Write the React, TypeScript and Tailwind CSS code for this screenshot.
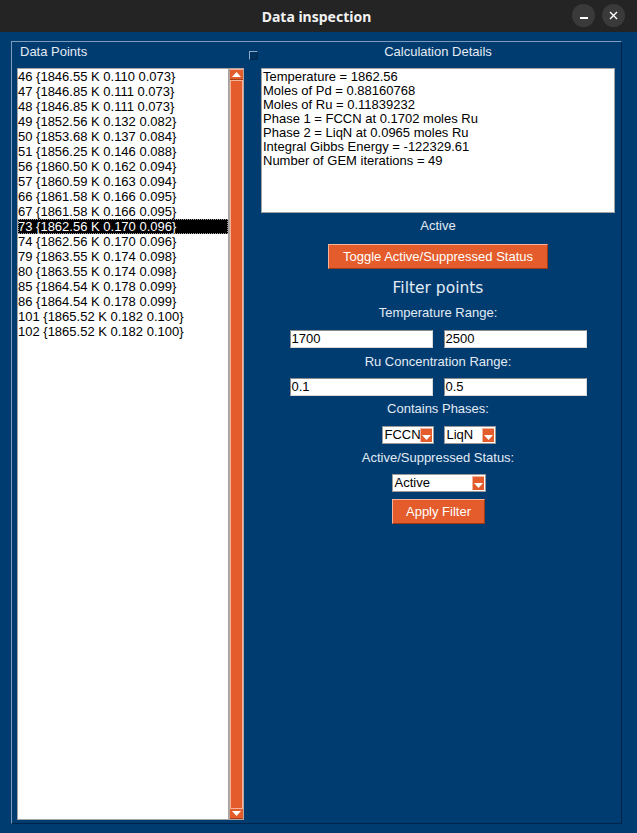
const points = [
  '46 {1846.55 K 0.110 0.073}',
  '47 {1846.85 K 0.111 0.073}',
  '48 {1846.85 K 0.111 0.073}',
  '49 {1852.56 K 0.132 0.082}',
  '50 {1853.68 K 0.137 0.084}',
  '51 {1856.25 K 0.146 0.088}',
  '56 {1860.50 K 0.162 0.094}',
  '57 {1860.59 K 0.163 0.094}',
  '66 {1861.58 K 0.166 0.095}',
  '67 {1861.58 K 0.166 0.095}',
  '73 {1862.56 K 0.170 0.096}',
  '74 {1862.56 K 0.170 0.096}',
  '79 {1863.55 K 0.174 0.098}',
  '80 {1863.55 K 0.174 0.098}',
  '85 {1864.54 K 0.178 0.099}',
  '86 {1864.54 K 0.178 0.099}',
  '101 {1865.52 K 0.182 0.100}',
  '102 {1865.52 K 0.182 0.100}',
]

const details = [
  'Temperature = 1862.56',
  'Moles of Pd = 0.88160768',
  'Moles of Ru = 0.11839232',
  'Phase 1 = FCCN at 0.1702 moles Ru',
  'Phase 2 = LiqN at 0.0965 moles Ru',
  'Integral Gibbs Energy = -122329.61',
  'Number of GEM iterations = 49',
]

const selected = '73'

function Arrow({ down }: { down?: boolean }) {
  return (
    <svg width="9" height="5" viewBox="0 0 9 5">
      <polygon points={down ? '0,0 9,0 4.5,5' : '0,5 9,5 4.5,0'} fill="#ffffff" />
    </svg>
  )
}

function Entry({ value }: { value: string }) {
  return (
    <div className="h-[18px] w-[143px] border border-t-[#8c8c8c] border-l-[#8c8c8c] border-b-[#d8d8d8] border-r-[#d8d8d8] bg-white pl-[1px] text-[13px] leading-[16px] text-black">
      {value}
    </div>
  )
}

/** Tk-style combobox: white field, the orange drop button sits over the end of the text */
function Combo({ value, width }: { value: string; width: string }) {
  return (
    <div className={`relative h-[18px] overflow-hidden border border-[#9a9a9a] bg-white ${width}`}>
      <span className="block whitespace-nowrap pl-[2px] text-[13px] leading-[16px] text-black">
        {value}
      </span>
      <span className="absolute right-[1px] top-[1px] flex h-[14px] w-[12px] items-end justify-center border-t border-l border-t-[#f3b39a] border-l-[#f3b39a] bg-[#e45c2b] pb-[2px]">
        <Arrow down />
      </span>
    </div>
  )
}

function TkButton({ label, pad }: { label: string; pad: string }) {
  return (
    <button
      className={`h-[25px] border border-t-[#f6b49a] border-l-[#f6b49a] border-b-[#9c3a16] border-r-[#9c3a16] bg-[#e45c2b] text-[13px] leading-[22px] text-white ${pad}`}
    >
      {label}
    </button>
  )
}

export default function App() {
  return (
    <div
      className="flex h-[833px] w-[637px] flex-col bg-[#013c71]"
      style={{ fontFamily: '"Liberation Sans", Arial, sans-serif' }}
    >
      {/* window title bar */}
      <div className="relative flex h-[32px] shrink-0 items-center justify-center bg-[#242424]">
        <span
          className="pr-[4px] text-[14px] font-bold text-[#f2f2f2]"
          style={{ fontFamily: '"Noto Sans", "DejaVu Sans", sans-serif' }}
        >
          Data inspection
        </span>
        <div className="absolute right-[12px] top-[4px] flex gap-[7px]">
          <div className="flex h-[23px] w-[23px] items-center justify-center rounded-full bg-[#3a3a3a]">
            <div className="mt-[5px] h-[1.5px] w-[8px] bg-white" />
          </div>
          <div className="flex h-[23px] w-[23px] items-center justify-center rounded-full bg-[#3a3a3a]">
            <svg width="9" height="9" viewBox="0 0 9 9">
              <path d="M1 1L8 8M8 1L1 8" stroke="#ffffff" strokeWidth="1.4" />
            </svg>
          </div>
        </div>
      </div>

      {/* outer label frame */}
      <div className="ml-[11px] mt-[9px] flex h-[783px] w-[611px] border border-t-[#7f9cbf] border-l-[#7f9cbf] border-b-[#00234a] border-r-[#00234a] px-[5px]">
        {/* left: data point list */}
        <div className="flex w-[227px] flex-col pt-[1px]">
          <div className="h-[18px] pl-[3px] text-[13px] leading-[18px] text-[#e3ebf4]">Data Points</div>
          <div className="mt-[7px] flex h-[752px]">
            <div className="flex-1 border border-[#a3a3a3] bg-white">
              {points.map((p) => {
                const active = p.startsWith(selected + ' ')
                return (
                  <div
                    key={p}
                    className={
                      active
                        ? 'h-[15px] whitespace-nowrap bg-black text-[13px] leading-[15px] text-white outline-1 -outline-offset-1 outline-dotted outline-[#9a9a9a]'
                        : 'h-[15px] whitespace-nowrap text-[13px] leading-[15px] text-black'
                    }
                  >
                    {p}
                  </div>
                )
              })}
            </div>
            <div className="flex w-[15px] flex-col border border-[#b8a59e] bg-[#e45c2b]">
              <div className="flex h-[11px] items-center justify-center border-b border-b-[#a3401a] border-t border-t-[#f3b39a]">
                <Arrow />
              </div>
              <div className="flex-1 border-t border-l border-t-[#f3b39a] border-l-[#f3b39a] border-r border-r-[#f3b39a]" />
              <div className="flex h-[11px] items-center justify-center border-t border-t-[#f3b39a] border-b border-b-[#a3401a]">
                <Arrow down />
              </div>
            </div>
          </div>
        </div>

        {/* spacer with tiny checkbutton */}
        <div className="w-[17px] pt-[8px]">
          <div className="ml-[5px] mt-[1px] h-[9px] w-[9px] border border-t-[#8fa9c8] border-l-[#8fa9c8] border-b-[#00284f] border-r-[#00284f] bg-[#00325f]" />
        </div>

        {/* right: details and filters */}
        <div className="flex w-[354px] flex-col items-center pt-[1px] text-[13px] text-[#e3ebf4]">
          <div className="h-[18px] leading-[18px]">Calculation Details</div>
          <div className="mt-[7px] h-[145px] w-full border border-[#a3a3a3] bg-white pl-[1px] pt-[1px] text-[13px] leading-[14px] text-black">
            {details.map((d) => (
              <div key={d}>{d}</div>
            ))}
          </div>
          <div className="mt-[4px] h-[18px] leading-[18px]">Active</div>
          <div className="mt-[9px]">
            <TkButton label="Toggle Active/Suppressed Status" pad="px-[14px]" />
          </div>
          <div
            className="mt-[9px] h-[20px] text-[15.5px] leading-[20px]"
            style={{ fontFamily: '"DejaVu Sans", sans-serif' }}
          >
            Filter points
          </div>
          <div className="mt-[6px] h-[18px] leading-[18px]">Temperature Range:</div>
          <div className="mt-[8px] flex gap-[11px]">
            <Entry value="1700" />
            <Entry value="2500" />
          </div>
          <div className="mt-[5px] h-[18px] leading-[18px]">Ru Concentration Range:</div>
          <div className="mt-[7px] flex gap-[11px]">
            <Entry value="0.1" />
            <Entry value="0.5" />
          </div>
          <div className="mt-[4px] h-[18px] leading-[18px]">Contains Phases:</div>
          <div className="mt-[8px] flex gap-[10px] pl-[1px]">
            <Combo value="FCCN" width="w-[52px]" />
            <Combo value="LiqN" width="w-[52px]" />
          </div>
          <div className="mt-[5px] h-[18px] leading-[18px]">Active/Suppressed Status:</div>
          <div className="mt-[7px] pl-[1px]">
            <Combo value="Active" width="w-[94px]" />
          </div>
          <div className="mt-[7px] pl-[1px]">
            <TkButton label="Apply Filter" pad="px-[13px]" />
          </div>
        </div>
      </div>
    </div>
  )
}
